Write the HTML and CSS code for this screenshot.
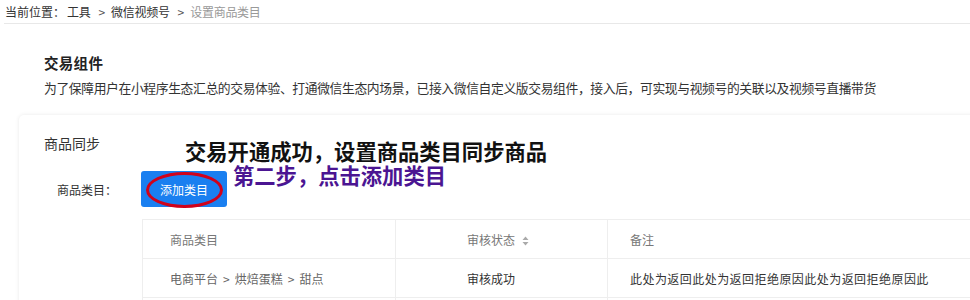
FILE: index.html
```html
<!DOCTYPE html>
<html lang="zh-CN">
<head>
<meta charset="utf-8">
<title>设置商品类目</title>
<link rel="stylesheet" href="styles.css">
</head>
<body>
<div class="crumb">
  <span class="crumb-label">当前位置：</span>
  <span class="crumb-item">工具</span>
  <span class="crumb-sep">&gt;</span>
  <span class="crumb-item">微信视频号</span>
  <span class="crumb-sep">&gt;</span>
  <span class="crumb-current">设置商品类目</span>
</div>
<div class="intro">
  <h2 class="intro-title">交易组件</h2>
  <p class="intro-desc">为了保障用户在小程序生态汇总的交易体验、打通微信生态内场景，已接入微信自定义版交易组件，接入后，可实现与视频号的关联以及视频号直播带货</p>
</div>
<div class="card">
  <div class="card-title">商品同步</div>
  <div class="form-row">
    <span class="form-label">商品类目：</span>
    <button class="btn-primary">添加类目<span class="ring"></span></button>
  </div>
  <table class="grid">
    <colgroup><col class="c1"><col class="c2"><col class="c3"></colgroup>
    <thead>
      <tr><th class="p1">商品类目</th><th class="p2">审核状态 <svg class="sort" width="7" height="10" viewBox="0 0 7 10"><path d="M3.5 0.5 L6.5 4 H0.5 Z M3.5 9.5 L6.5 6 H0.5 Z" fill="#aaa"/></svg></th><th class="p3">备注</th></tr>
    </thead>
    <tbody>
      <tr><td class="p1 muted">电商平台<span class="gt">&gt;</span>烘焙蛋糕<span class="gt">&gt;</span>甜点</td><td class="p2">审核成功</td><td class="p3 remark">此处为返回此处为返回拒绝原因此处为返回拒绝原因此</td></tr>
      <tr><td class="p1"></td><td class="p2"></td><td class="p3"></td></tr>
    </tbody>
  </table>
  <div class="note note-main">交易开通成功，设置商品类目同步商品</div>
  <div class="note note-step">第二步，点击添加类目</div>
</div>
</body>
</html>
```
FILE: styles.css
```css
html, body {
  margin: 0;
  padding: 0;
  background: #fff;
  font-family: "Noto Sans CJK SC", "Noto Sans", sans-serif;
  color: #333;
  overflow: hidden;
}
.crumb {
  margin-left: 4px;
  padding-left: 1px;
  height: 24px;
  box-sizing: border-box;
  border-bottom: 1px solid #e8e8e8;
  font-size: 12px;
  line-height: 20px;
  white-space: nowrap;
  display: flex;
  align-items: center;
}
.crumb-label { color: #333; margin-right: 2px; }
.crumb-item { color: #333; letter-spacing: -0.3px; }
.crumb-sep { color: #555; margin: 0 6px 0 8px; font-size: 12px; }
.crumb-current { color: #999; letter-spacing: -0.3px; }
.intro {
  padding: 29px 44px 0 44px;
}
.intro-title {
  margin: 0;
  font-size: 14.5px;
  font-weight: bold;
  line-height: 20px;
  color: #222;
  letter-spacing: 0.3px;
}
.intro-desc {
  margin: 5px 0 0 0;
  font-size: 12.8px;
  letter-spacing: -0.38px;
  line-height: 20px;
  color: #333;
  white-space: nowrap;
}
.card {
  position: relative;
  margin: 17px 0 0 19px;
  width: 1000px;
  background: #fff;
  border-radius: 5px 0 0 0;
  box-shadow: 0 0 4px rgba(0,0,0,0.09);
  padding: 18px 0 0 25px;
  height: 300px;
  box-sizing: border-box;
}
.card-title {
  font-size: 14px;
  line-height: 20px;
  color: #333;
}
.form-row {
  display: flex;
  align-items: center;
  margin-top: 18px;
  margin-left: 13px;
}
.form-label {
  font-size: 12px;
  color: #333;
  width: 84px;
}
.btn-primary {
  position: relative;
  width: 86px;
  height: 36px;
  border: none;
  border-radius: 3px;
  background: #1a7ff0;
  color: #fff;
  font-family: inherit;
  font-size: 12px;
  padding: 0;
}
.ring {
  position: absolute;
  left: 5px;
  top: 1px;
  width: 77px;
  height: 36px;
  box-sizing: border-box;
  border: 3px solid #d0021b;
  border-radius: 50%;
}
.grid {
  margin: 12px 0 0 98px;
  border-collapse: collapse;
  table-layout: fixed;
  width: 900px;
  font-size: 12px;
}
.c1 { width: 253px; }
.c2 { width: 212px; }
.c3 { width: 435px; }
.grid th, .grid td {
  border: 1px solid #eeeeee;
  height: 38px;
  padding: 0;
  text-align: left;
  white-space: nowrap;
  overflow: hidden;
}
.grid th { font-weight: normal; color: #777; }
.grid td { color: #333; }
.grid td.muted { color: #666; }
.gt { margin: 0 5px; }
.remark { letter-spacing: 0.45px; }
.p1 { padding-left: 27px !important; }
.p2 { padding-left: 71px !important; }
.p3 { padding-left: 22px !important; }
.sort { vertical-align: -1px; margin-left: 4px; }
.note {
  position: absolute;
  font-weight: bold;
  font-size: 21.3px;
  line-height: 22px;
  white-space: nowrap;
}
.note-main { left: 166px; top: 25px; color: #111; }
.note-step { left: 214px; top: 49px; color: #4b1592; }
```
